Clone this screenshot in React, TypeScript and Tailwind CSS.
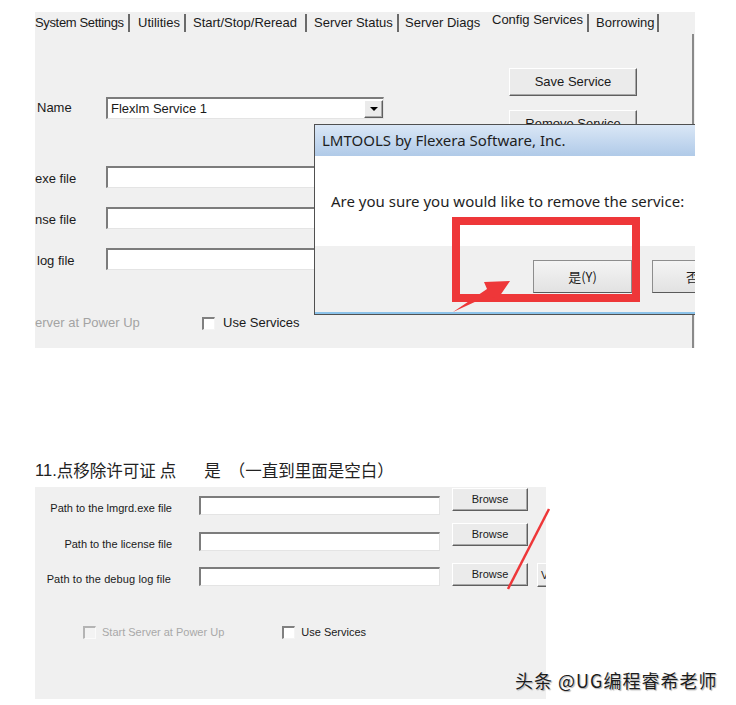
import React from "react";

const raised =
  "bg-[#ebebeb] border border-t-[#ffffff] border-l-[#ffffff] border-r-[#5f5f5f] border-b-[#5f5f5f] shadow-[inset_-1px_-1px_0_#a8a8a8]";
const sunken =
  "bg-white border-t-2 border-l-2 border-t-[#7c7c7c] border-l-[#7c7c7c] border-b border-r border-b-[#e4e4e4] border-r-[#e4e4e4]";

function Sep() {
  return <div className="w-[2px] h-[18px] shrink-0 bg-[#6a6a6a]" />;
}

function Check({ disabled }: { disabled?: boolean }) {
  return (
    <div
      className={
        disabled
          ? "w-[13px] h-[13px] shrink-0 bg-[#f3f3f3] border-t-2 border-l-2 border-t-[#b4b4b4] border-l-[#b4b4b4] border-b border-r border-b-[#fafafa] border-r-[#fafafa]"
          : "w-[13px] h-[13px] shrink-0 bg-white border-t-2 border-l-2 border-t-[#808080] border-l-[#808080] border-b border-r border-b-[#f4f4f4] border-r-[#f4f4f4]"
      }
    />
  );
}

function TopPanel() {
  return (
    <div className="relative w-[660px] h-[336px] bg-[#f0f0f0] overflow-hidden text-[13px] text-[#1a1a1a]">
      {/* tabs */}
      <div className="flex items-center h-[22px] whitespace-nowrap">
        <span className="w-[93px] shrink-0 tracking-[-0.35px]">System Settings</span>
        <Sep />
        <span className="w-[54px] shrink-0 pl-[8px]">Utilities</span>
        <Sep />
        <span className="w-[119px] shrink-0 pl-[7px]">Start/Stop/Reread</span>
        <Sep />
        <span className="w-[90px] shrink-0 pl-[7px]">Server Status</span>
        <Sep />
        <span className="w-[87px] shrink-0 pl-[6px]">Server Diags</span>
        <span className="w-[101px] shrink-0 pl-[6px] -translate-y-[3px]">Config Services</span>
        <Sep />
        <span className="w-[68px] shrink-0 pl-[7px]">Borrowing</span>
        <Sep />
      </div>
      {/* body */}
      <div className="flex w-[659px] h-[314px] border-r-2 border-r-[#8a8a8a]">
        <div className="w-[474px] shrink-0 pt-[63px] flex flex-col">
          <div className="flex items-center h-[22px]">
            <span className="w-[71px] shrink-0 pl-[2px]">Name</span>
            <div className={"w-[278px] h-[22px] shrink-0 flex items-center " + sunken}>
              <span className="flex-1 pl-[3px]">Flexlm Service 1</span>
              <div className={"w-[19px] h-[18px] flex items-center justify-center " + raised}>
                <div className="w-0 h-0 border-l-[4px] border-r-[4px] border-t-[4px] border-l-transparent border-r-transparent border-t-black" />
              </div>
            </div>
          </div>
          <div className="flex items-center h-[22px] mt-[47px]">
            <span className="w-[71px] shrink-0 pt-[4px]">exe file</span>
            <div className={"w-[384px] h-[22px] shrink-0 " + sunken} />
          </div>
          <div className="flex items-center h-[22px] mt-[19px]">
            <span className="w-[71px] shrink-0 pt-[4px]">nse file</span>
            <div className={"w-[384px] h-[22px] shrink-0 " + sunken} />
          </div>
          <div className="flex items-center h-[22px] mt-[19px]">
            <span className="w-[71px] shrink-0 pt-[4px] pl-[2px]">log file</span>
            <div className={"w-[384px] h-[22px] shrink-0 " + sunken} />
          </div>
          <div className="flex items-center h-[14px] mt-[46px]">
            <span className="w-[167px] shrink-0 text-[#a3a3a3]">erver at Power Up</span>
            <Check />
            <span className="ml-[8px]">Use Services</span>
          </div>
        </div>
        <div className="pt-[34px] flex flex-col">
          <div className={"w-[128px] h-[28px] flex items-center justify-center " + raised}>Save Service</div>
          <div className={"w-[128px] h-[28px] mt-[14px] flex items-center justify-center " + raised}>Remove Service</div>
        </div>
      </div>

      {/* dialog */}
      <div className="absolute left-[279px] top-[112px] w-[430px] h-[191px] border border-[#505050] bg-[#f0f0f0] flex flex-col font-['Noto_Sans','Noto_Sans_CJK_SC',sans-serif] text-[15px] text-[#1e1e1e]">
        <div className="h-[31px] shrink-0 bg-linear-to-b from-[#dae7f6] to-[#b0cae8] pl-[7px] flex items-center whitespace-nowrap">
          LMTOOLS by Flexera Software, Inc.
        </div>
        <div className="h-[90px] shrink-0 bg-white pl-[16px] flex items-center whitespace-nowrap">
          Are you sure you would like to remove the service:
        </div>
        <div className="h-[66px] shrink-0 pt-[14px] pl-[218px] flex gap-[20px] text-[13px]">
          <div className="w-[99px] h-[33px] shrink-0 flex items-center justify-center bg-linear-to-b from-[#f4f4f4] to-[#e2e2e2] border border-[#8d8d8d] border-b-[#5a5a5a] font-['Noto_Sans_CJK_SC',sans-serif]">
            是(Y)
          </div>
          <div className="w-[99px] h-[33px] shrink-0 flex items-center justify-center bg-linear-to-b from-[#f4f4f4] to-[#e2e2e2] border border-[#8d8d8d] border-b-[#5a5a5a] font-['Noto_Sans_CJK_SC',sans-serif]">
            否(N)
          </div>
        </div>
        <div className="h-[2px] shrink-0 bg-[#8cc3ea]" />
      </div>
    </div>
  );
}

function BottomPanel() {
  return (
    <div className="relative w-[511px] h-[212px] bg-[#f0f0f0] overflow-hidden text-[11px] text-[#1a1a1a] whitespace-nowrap">
      <div className="flex items-start h-[36px]">
        <span className="w-[137px] shrink-0 text-right leading-[19px] mt-[12px]">Path to the lmgrd.exe file</span>
        <div className={"ml-[27px] mt-[9px] w-[241px] h-[19px] shrink-0 " + sunken} />
        <div className={"ml-[12px] mt-[1px] w-[76px] h-[23px] shrink-0 flex items-center justify-center " + raised}>Browse</div>
      </div>
      <div className="flex items-start h-[40px]">
        <span className="w-[137px] shrink-0 text-right leading-[19px] mt-[12px]">Path to the license file</span>
        <div className={"ml-[27px] mt-[9px] w-[241px] h-[19px] shrink-0 " + sunken} />
        <div className={"ml-[12px] w-[76px] h-[23px] shrink-0 flex items-center justify-center " + raised}>Browse</div>
      </div>
      <div className="flex items-start h-[39px]">
        <span className="w-[136px] shrink-0 text-right leading-[19px] mt-[7px] tracking-[0.1px]">Path to the debug log file</span>
        <div className={"ml-[28px] mt-[4px] w-[241px] h-[19px] shrink-0 " + sunken} />
        <div className={"ml-[12px] w-[76px] h-[23px] shrink-0 flex items-center justify-center " + raised}>Browse</div>
        <div className={"ml-[9px] w-[76px] h-[24px] shrink-0 flex items-center pl-[3px] " + raised}>View Log</div>
      </div>
      <div className="flex items-center h-[13px] mt-[24px] pl-[48px]">
        <Check disabled />
        <span className="ml-[6px] text-[#a8a8a8]">Start Server at Power Up</span>
        <div className="ml-[58px]">
          <Check />
        </div>
        <span className="ml-[6px]">Use Services</span>
      </div>
    </div>
  );
}

export default function App() {
  return (
    <div className="relative w-[736px] h-[705px] overflow-hidden bg-white font-['Liberation_Sans',Arial,sans-serif] text-[#1a1a1a]">
      <div className="pt-[12px] pl-[35px]">
        <TopPanel />
        <div className="mt-[112px] h-[21px] leading-[21px] text-[16.5px] text-[#222] whitespace-nowrap font-['Noto_Sans_CJK_SC',sans-serif] flex">
          <span className="font-['Liberation_Sans',sans-serif]">11.</span>
          <span>点移除许可证</span>
          <span className="ml-[4px]">点</span>
          <span className="ml-[28px]">是</span>
          <span className="ml-[8px]">（一直到里面是空白）</span>
        </div>
        <div className="mt-[6px]">
          <BottomPanel />
        </div>
      </div>

      {/* red highlight box */}
      <div className="absolute left-[452px] top-[217px] w-[188px] h-[85px] border-[8px] border-[#ee3739]" />
      <svg className="absolute left-0 top-0 pointer-events-none" width={736} height={705}>
        <polygon points="453,312 490,295 497,300 510,281 484,282 487,289" fill="#ee3739" />
        <line x1={508} y1={589} x2={549} y2={509} stroke="#ee3739" strokeWidth={2.5} />
      </svg>

      {/* watermark */}
      <div className="absolute left-[515px] top-[667px] text-[18px] tracking-[1px] text-[#1c1c1c] font-['Noto_Sans_CJK_SC',sans-serif] whitespace-nowrap [text-shadow:0_0_2px_#ffffff,1px_1px_1px_#9a9a9a]">
        头条 @UG编程睿希老师
      </div>
    </div>
  );
}
